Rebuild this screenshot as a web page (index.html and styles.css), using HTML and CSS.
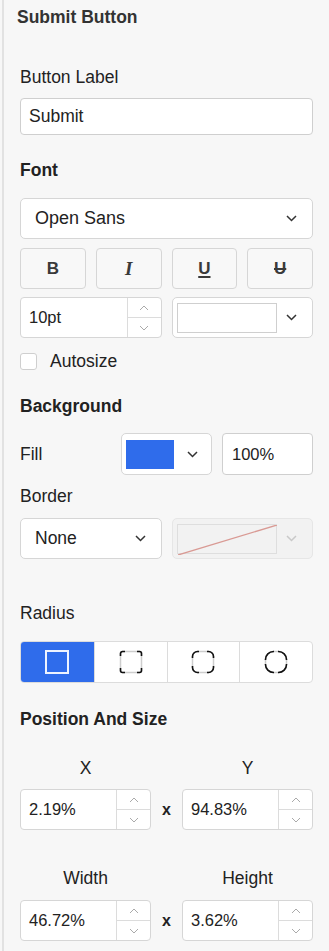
FILE: index.html
```html
<!DOCTYPE html>
<html lang="en">
<head>
  <meta charset="UTF-8" />
  <meta name="viewport" content="width=device-width, initial-scale=1.0"/>
  <title>Submit Button</title>
  <link rel="stylesheet" href="styles.css">
</head>
<body>
  <div class="panel">
    <h1 class="title">Submit Button</h1>

    <div class="label label-first">Button Label</div>
    <div class="field text-field">Submit</div>

    <h2 class="heading">Font</h2>
    <div class="select font-select">
      <span>Open Sans</span>
      <svg class="chevron" width="11" height="7" viewBox="0 0 11 7"><path d="M1 1l4.5 4.5L10 1"/></svg>
    </div>
    <div class="format-row">
      <div class="fmt fmt-b">B</div>
      <div class="fmt fmt-i">I</div>
      <div class="fmt fmt-u">U</div>
      <div class="fmt fmt-s">U</div>
    </div>
    <div class="two-col size-row">
      <div class="number">
        <div class="value">10pt</div>
        <div class="spin">
          <span><svg width="10" height="6" viewBox="0 0 10 6"><path d="M1 5l4-4 4 4"/></svg></span>
          <span><svg width="10" height="6" viewBox="0 0 10 6"><path d="M1 1l4 4 4-4"/></svg></span>
        </div>
      </div>
      <div class="select color-select">
        <span class="color-box"></span>
        <svg class="chevron" width="11" height="7" viewBox="0 0 11 7"><path d="M1 1l4.5 4.5L10 1"/></svg>
      </div>
    </div>
    <div class="check">
      <span class="box"></span>
      <span>Autosize</span>
    </div>

    <h2 class="heading heading-bg">Background</h2>
    <div class="fill-row">
      <div class="fill-label">Fill</div>
      <div class="select fill-select">
        <span class="swatch"></span>
        <svg class="chevron" width="11" height="7" viewBox="0 0 11 7"><path d="M1 1l4.5 4.5L10 1"/></svg>
      </div>
      <div class="field pct-field">100%</div>
    </div>
    <div class="label label-border">Border</div>
    <div class="two-col border-row">
      <div class="select none-select">
        <span>None</span>
        <svg class="chevron" width="11" height="7" viewBox="0 0 11 7"><path d="M1 1l4.5 4.5L10 1"/></svg>
      </div>
      <div class="select color-select disabled">
        <span class="color-box">
          <svg width="99" height="30" viewBox="0 0 99 30" preserveAspectRatio="none"><line x1="0" y1="30" x2="99" y2="0"/></svg>
        </span>
        <svg class="chevron" width="11" height="7" viewBox="0 0 11 7"><path d="M1 1l4.5 4.5L10 1"/></svg>
      </div>
    </div>

    <div class="label label-radius">Radius</div>
    <div class="segments">
      <div class="seg active">
        <svg width="24" height="24" viewBox="0 0 24 24"><rect x="1" y="1" width="22" height="22" class="sel"/></svg>
      </div>
      <div class="seg">
        <svg width="24" height="24" viewBox="0 0 24 24">
          <rect x="1.5" y="1.5" width="21" height="21" rx="2" class="edge"/>
          <path class="corner" d="M1.5 6V3.5a2 2 0 0 1 2-2H6M18 1.5h2.5a2 2 0 0 1 2 2V6M22.5 18v2.5a2 2 0 0 1-2 2H18M6 22.5H3.5a2 2 0 0 1-2-2V18"/>
        </svg>
      </div>
      <div class="seg">
        <svg width="24" height="24" viewBox="0 0 24 24">
          <rect x="1.5" y="1.5" width="21" height="21" rx="5" class="edge"/>
          <path class="corner" d="M1.5 8V6.5a5 5 0 0 1 5-5H8M16 1.5h1.5a5 5 0 0 1 5 5V8M22.5 16v1.5a5 5 0 0 1-5 5H16M8 22.5H6.5a5 5 0 0 1-5-5V16"/>
        </svg>
      </div>
      <div class="seg">
        <svg width="24" height="24" viewBox="0 0 24 24">
          <rect x="1.5" y="1.5" width="21" height="21" rx="8" class="edge"/>
          <path class="corner" d="M1.5 10V9.5a8 8 0 0 1 8-8h0.5M14 1.5h0.5a8 8 0 0 1 8 8V10M22.5 14v0.5a8 8 0 0 1-8 8H14M10 22.5H9.5a8 8 0 0 1-8-8V14"/>
        </svg>
      </div>
    </div>

    <h2 class="heading heading-pos">Position And Size</h2>
    <div class="pos-grid">
      <div class="pos-label">X</div>
      <div></div>
      <div class="pos-label">Y</div>
      <div class="number">
        <div class="value">2.19%</div>
        <div class="spin">
          <span><svg width="10" height="6" viewBox="0 0 10 6"><path d="M1 5l4-4 4 4"/></svg></span>
          <span><svg width="10" height="6" viewBox="0 0 10 6"><path d="M1 1l4 4 4-4"/></svg></span>
        </div>
      </div>
      <div class="times">x</div>
      <div class="number">
        <div class="value">94.83%</div>
        <div class="spin">
          <span><svg width="10" height="6" viewBox="0 0 10 6"><path d="M1 5l4-4 4 4"/></svg></span>
          <span><svg width="10" height="6" viewBox="0 0 10 6"><path d="M1 1l4 4 4-4"/></svg></span>
        </div>
      </div>
    </div>
    <div class="pos-grid pos-size">
      <div class="pos-label">Width</div>
      <div></div>
      <div class="pos-label">Height</div>
      <div class="number">
        <div class="value">46.72%</div>
        <div class="spin">
          <span><svg width="10" height="6" viewBox="0 0 10 6"><path d="M1 5l4-4 4 4"/></svg></span>
          <span><svg width="10" height="6" viewBox="0 0 10 6"><path d="M1 1l4 4 4-4"/></svg></span>
        </div>
      </div>
      <div class="times">x</div>
      <div class="number">
        <div class="value">3.62%</div>
        <div class="spin">
          <span><svg width="10" height="6" viewBox="0 0 10 6"><path d="M1 5l4-4 4 4"/></svg></span>
          <span><svg width="10" height="6" viewBox="0 0 10 6"><path d="M1 1l4 4 4-4"/></svg></span>
        </div>
      </div>
    </div>
  </div>
</body>
</html>
```

FILE: styles.css
```css
body {
  margin: 0;
  background-color: #f7f7f7;
  font-family: "Liberation Sans", Arial, sans-serif;
  font-size: 17.5px;
  color: #222;
}
.panel {
  margin-left: 2px;
  border-left: 2px solid #e2e2e2;
  padding: 6px 16px 10px 16px;
  min-height: 100vh;
  box-sizing: border-box;
  display: flex;
  flex-direction: column;
}
.title {
  margin: 0 0 0 -3px;
  font-size: 17.5px;
  line-height: 23px;
  font-weight: bold;
  color: #333;
}
.label {
  line-height: 22px;
  margin-bottom: 10px;
}
.label-first { margin-top: 37px; }
.label-border { margin-top: 10px; margin-bottom: 11px; }
.label-radius { margin-top: 43px; margin-bottom: 17px; }
.heading {
  margin: 24px 0 17px 0;
  font-size: 17.5px;
  line-height: 22px;
  font-weight: bold;
  color: #222;
}
.heading-bg { margin-top: 23px; margin-bottom: 16px; }
.heading-pos { margin-top: 25px; margin-bottom: 27px; }

.field {
  box-sizing: border-box;
  background-color: #fff;
  border: 1px solid #cfcfcf;
  border-radius: 4px;
  display: flex;
  align-items: center;
}
.text-field {
  height: 37px;
  padding-left: 8px;
}
.pct-field {
  height: 42px;
  padding-left: 9px;
  font-size: 16.5px;
}

.select {
  box-sizing: border-box;
  height: 41px;
  background-color: #fff;
  border: 1px solid #d6d6d6;
  border-radius: 5px;
  display: flex;
  align-items: center;
  justify-content: space-between;
  padding: 0 15px 0 14px;
}
.font-select { font-size: 18px; }
.chevron path {
  fill: none;
  stroke: #333;
  stroke-width: 1.5;
}
.color-select {
  padding: 0 15px 0 4px;
}
.color-box {
  box-sizing: border-box;
  width: 100px;
  height: 30px;
  background-color: #fff;
  border: 1px solid #cfcfcf;
  display: block;
}
.color-select.disabled {
  background-color: #f2f2f2;
  border-color: #e6e6e6;
}
.color-select.disabled .color-box {
  background-color: #f2f2f2;
  border-color: #dedede;
}
.color-box svg { display: block; }
.color-box line {
  stroke: #d99a94;
  stroke-width: 1.3;
}
.color-select.disabled .chevron path { stroke: #c9c9c9; }

.format-row {
  margin-top: 9px;
  display: grid;
  grid-template-columns: repeat(4, 1fr);
  gap: 10px;
}
.fmt {
  height: 41px;
  box-sizing: border-box;
  border: 1px solid #d6d6d6;
  border-radius: 4px;
  background-color: #f8f8f8;
  display: flex;
  align-items: center;
  justify-content: center;
  font-weight: bold;
  font-size: 17px;
  color: #3a3a3a;
}
.fmt-i {
  font-family: "Liberation Serif", serif;
  font-style: italic;
  font-size: 19px;
}
.fmt-u {
  text-decoration: underline;
  text-decoration-thickness: 2px;
  text-underline-offset: 2px;
}
.fmt-s {
  text-decoration: line-through;
  text-decoration-thickness: 2px;
}

.two-col {
  display: grid;
  grid-template-columns: 1fr 1fr;
  gap: 10px;
}
.size-row { margin-top: 8px; }
.border-row { }

.number {
  box-sizing: border-box;
  height: 41px;
  background-color: #fff;
  border: 1px solid #d6d6d6;
  border-radius: 4px;
  display: flex;
}
.number .value {
  flex: 1;
  display: flex;
  align-items: center;
  padding-left: 8px;
  font-size: 16.5px;
}
.spin {
  width: 33px;
  border-left: 1px solid #dcdcdc;
  display: flex;
  flex-direction: column;
}
.spin span {
  flex: 1;
  display: flex;
  align-items: center;
  justify-content: center;
}
.spin span + span { border-top: 1px solid #dcdcdc; }
.spin path {
  fill: none;
  stroke: #aaa;
  stroke-width: 1;
}

.check {
  margin-top: 12px;
  height: 22px;
  display: flex;
  align-items: center;
  gap: 13px;
}
.box {
  width: 17px;
  height: 17px;
  box-sizing: border-box;
  border: 1px solid #cfcfcf;
  border-radius: 3px;
  background-color: #fff;
}

.fill-row {
  display: grid;
  grid-template-columns: 1fr 1fr 1fr;
  gap: 10px;
  align-items: center;
}
.fill-select {
  height: 42px;
  padding: 0 13px 0 4px;
}
.swatch {
  width: 48px;
  height: 29px;
  background-color: #2f6ceb;
}

.segments {
  display: grid;
  grid-template-columns: repeat(4, 1fr);
  height: 42px;
  box-sizing: border-box;
  border: 1px solid #dcdcdc;
  border-radius: 4px;
  background-color: #fff;
  overflow: hidden;
}
.seg {
  display: flex;
  align-items: center;
  justify-content: center;
}
.seg + .seg { border-left: 1px solid #dcdcdc; }
.seg.active { background-color: #2f6ceb; }
.seg .sel {
  fill: none;
  stroke: #eef3ff;
  stroke-width: 2;
}
.seg .edge {
  fill: none;
  stroke: #cdcdcd;
  stroke-width: 1.5;
}
.seg .corner {
  fill: none;
  stroke: #111;
  stroke-width: 1.6;
}

.pos-grid {
  display: grid;
  grid-template-columns: 1fr 31px 1fr;
  row-gap: 10px;
}
.pos-size { margin-top: 37px; row-gap: 11px; }
.pos-label {
  text-align: center;
  line-height: 22px;
}
.times {
  display: flex;
  align-items: center;
  justify-content: center;
  font-weight: bold;
  font-size: 16px;
  color: #222;
}
```
